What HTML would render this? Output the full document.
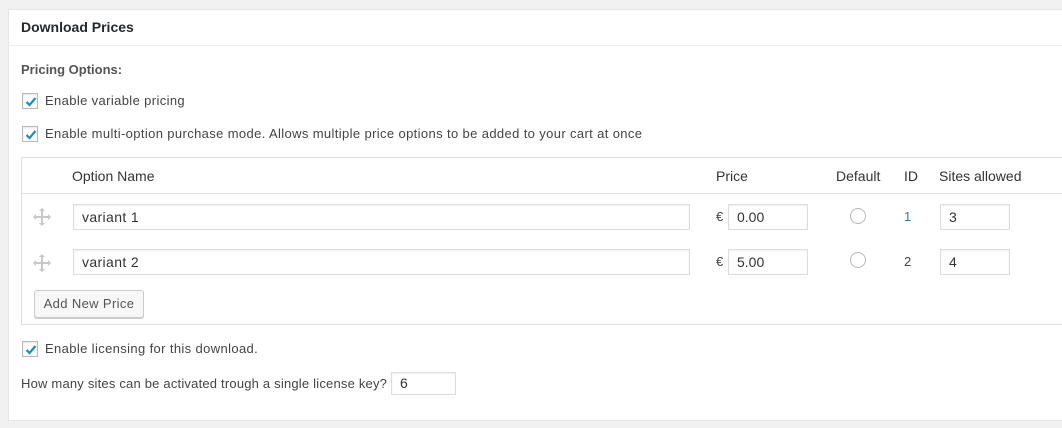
<!DOCTYPE html>
<html><head><style>
body{margin:0;background:#f1f1f1;font-family:"Liberation Sans",sans-serif;font-size:13px;color:#444;width:1062px;height:428px;overflow:hidden;position:relative}
.a{position:absolute;white-space:nowrap}
.panel{position:absolute;left:8px;top:9px;width:1070px;height:412px;background:#fff;border:1px solid #e5e5e5;box-sizing:border-box}
.hdr{position:absolute;left:8px;top:45px;width:1060px;height:1px;background:#eee}
.cb{position:absolute;width:16px;height:16px;border:1px solid #b4b9be;box-sizing:border-box;background:#fff;box-shadow:inset 0 1px 2px rgba(0,0,0,.1)}
.cb svg{position:absolute;left:0;top:0}
.in{position:absolute;height:26px;border:1px solid #ddd;box-sizing:border-box;background:#fff;box-shadow:inset 0 1px 2px rgba(0,0,0,.07);padding-left:8px;line-height:24px;font-size:14px;color:#333}
.tbl{position:absolute;left:21px;top:157px;width:1050px;height:168px;border:1px solid #e1e1e1;box-sizing:border-box}
.radio{position:absolute;width:16px;height:16px;border:1px solid #b4b9be;border-radius:50%;box-sizing:border-box;background:#fff}
.btn{position:absolute;left:34px;top:290px;width:110px;height:28px;border:1px solid #ccc;border-radius:3px;background:#f7f7f7;box-sizing:border-box;box-shadow:0 1px 0 #ccc;text-align:center;line-height:26px;color:#555}
.ls{letter-spacing:0.37px}
</style></head><body>
<div class="panel"></div>
<div class="hdr"></div>
<div class="a" style="left:21px;top:19px;font-size:14px;font-weight:bold;color:#23282d">Download Prices</div>
<div class="a" style="left:21px;top:62px;font-weight:bold;color:#555">Pricing Options:</div>
<div class="cb" style="left:22px;top:93px"><svg width="16" height="16"><path d="M3.5 8l3 3 6-7" stroke="#1e8cbe" stroke-width="2.2" fill="none"/></svg></div>
<div class="a ls" style="left:45px;top:93px">Enable variable pricing</div>
<div class="cb" style="left:22px;top:126px"><svg width="16" height="16"><path d="M3.5 8l3 3 6-7" stroke="#1e8cbe" stroke-width="2.2" fill="none"/></svg></div>
<div class="a ls" style="left:45px;top:126px">Enable multi-option purchase mode. Allows multiple price options to be added to your cart at once</div>
<div class="tbl"></div>
<div style="position:absolute;left:22px;top:193px;width:1050px;height:1px;background:#e1e1e1"></div>
<div class="a" style="left:72px;top:168px;font-size:14px;color:#333">Option Name</div>
<div class="a" style="left:716px;top:168px;font-size:14px;color:#333">Price</div>
<div class="a" style="left:836px;top:168px;font-size:14px;color:#333">Default</div>
<div class="a" style="left:904px;top:168px;font-size:14px;color:#333">ID</div>
<div class="a" style="left:939px;top:168px;font-size:14px;color:#333">Sites allowed</div>

<svg class="a" style="left:32px;top:207px" width="20" height="20" viewBox="0 0 20 20"><path d="M10 1l3 3h-2v5h5V7l3 3-3 3v-2h-5v5h2l-3 3-3-3h2v-5H4v2l-3-3 3-3v2h5V4H7z" fill="#c8c8c8"/></svg>
<div class="in ls" style="left:73px;top:204px;width:617px">variant 1</div>
<div class="a" style="left:716px;top:209px;font-size:13px">€</div>
<div class="in" style="left:728px;top:204px;width:80px">0.00</div>
<div class="radio" style="left:850px;top:208px"></div>
<div class="a" style="left:904px;top:209px;color:#2a7ab0">1</div>
<div class="in" style="left:940px;top:204px;width:70px">3</div>

<svg class="a" style="left:32px;top:253px" width="20" height="20" viewBox="0 0 20 20"><path d="M10 1l3 3h-2v5h5V7l3 3-3 3v-2h-5v5h2l-3 3-3-3h2v-5H4v2l-3-3 3-3v2h5V4H7z" fill="#c8c8c8"/></svg>
<div class="in ls" style="left:73px;top:249px;width:617px">variant 2</div>
<div class="a" style="left:716px;top:254px;font-size:13px">€</div>
<div class="in" style="left:728px;top:249px;width:80px">5.00</div>
<div class="radio" style="left:850px;top:252px"></div>
<div class="a" style="left:904px;top:254px">2</div>
<div class="in" style="left:940px;top:249px;width:70px">4</div>

<div class="btn ls">Add New Price</div>
<div class="cb" style="left:22px;top:341px"><svg width="16" height="16"><path d="M3.5 8l3 3 6-7" stroke="#1e8cbe" stroke-width="2.2" fill="none"/></svg></div>
<div class="a ls" style="left:45px;top:341px">Enable licensing for this download.</div>
<div class="a" style="left:21px;top:376px;letter-spacing:0.2px">How many sites can be activated trough a single license key?</div>
<div class="in" style="left:391px;top:372px;width:65px;height:23px;line-height:21px">6</div>
</body></html>
